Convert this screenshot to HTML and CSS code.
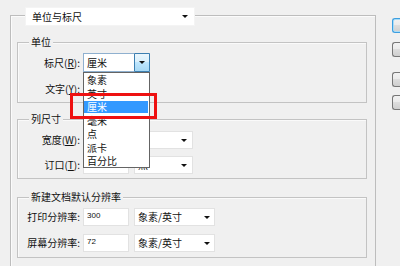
FILE: index.html
```html
<!DOCTYPE html>
<html lang="zh-CN">
<head>
<meta charset="utf-8">
<title>单位与标尺</title>
<link rel="stylesheet" href="styles.css">
</head>
<body>
<div class="window">
  <div class="panel">
    <div class="field select panel-head"><span>单位与标尺</span><i class="caret"></i></div>

    <section class="group group-units">
      <div class="group-title">单位</div>
      <div class="rows">
        <div class="row row-19">
          <span class="lbl">标尺(<u>R</u>):</span>
          <div class="combo-wrap">
            <div class="field select select-focus w67"><span>厘米</span><span class="drop-btn"><i class="caret"></i></span></div>
            <ul class="listbox">
              <li>象素</li>
              <li>英寸</li>
              <li class="hl">厘米</li>
              <li>毫米</li>
              <li>点</li>
              <li>派卡</li>
              <li>百分比</li>
            </ul>
            <div class="callout"></div>
          </div>
        </div>
        <div class="row row-19">
          <span class="lbl">文字(<u>Y</u>):</span>
          <div class="field select w67"><span></span><i class="caret"></i></div>
        </div>
      </div>
    </section>

    <section class="group group-cols">
      <div class="group-title">列尺寸</div>
      <div class="rows">
        <div class="row">
          <span class="lbl">宽度(<u>W</u>):</span>
          <div class="field w46"></div>
          <div class="field select w59"><span></span><i class="caret"></i></div>
        </div>
        <div class="row">
          <span class="lbl">订口(<u>T</u>):</span>
          <div class="field w46"></div>
          <div class="field select w59"><span>点</span><i class="caret"></i></div>
        </div>
      </div>
    </section>

    <section class="group group-res">
      <div class="group-title">新建文档默认分辨率</div>
      <div class="rows">
        <div class="row">
          <span class="lbl">打印分辨率:</span>
          <div class="field w46 num">300</div>
          <div class="field select w81"><span>象素/英寸</span><i class="caret"></i></div>
        </div>
        <div class="row">
          <span class="lbl">屏幕分辨率:</span>
          <div class="field w46 num">72</div>
          <div class="field select w81"><span>象素/英寸</span><i class="caret"></i></div>
        </div>
      </div>
    </section>
  </div>

  <div class="buttons">
    <div class="btn btn-default"></div>
    <div class="btn b2"></div>
    <div class="btn b3"></div>
    <div class="btn b4"></div>
  </div>
</div>
</body>
</html>
```

FILE: styles.css
```css
html, body {
  margin: 0;
  padding: 0;
  width: 400px;
  height: 266px;
  overflow: hidden;
  background: #f0f0f0;
}
body {
  font-family: "Noto Sans CJK SC", "Noto Sans", sans-serif;
  font-size: 10px;
  color: #111;
  line-height: 12px;
}
.window {
  display: flex;
  align-items: flex-start;
}
.panel {
  flex: none;
  margin: 15px 0 0 10px;
  width: 366px;
  height: 251px;
  box-sizing: border-box;
  border: 1px solid #bdbdbd;
  border-bottom: none;
  padding: 0 8px 0 6px;
  box-shadow: inset 1px 1px 0 #fbfbfb;
}
.field {
  background: #fff;
  border: 1px solid #e2e2e2;
  box-sizing: border-box;
  height: 18px;
  display: flex;
  align-items: center;
  padding-left: 3px;
  flex: none;
}
.select {
  justify-content: space-between;
}
.caret {
  display: block;
  width: 0;
  height: 0;
  border-left: 3px solid transparent;
  border-right: 3px solid transparent;
  border-top: 3px solid #111;
  margin-right: 5px;
}
.panel-head {
  margin: -9px 0 0 8px;
  width: 170px;
  height: 19px;
  padding-left: 6px;
  border-color: #f4f4f4;
}
.panel-head .caret { margin-right: 6px; }

.group {
  border: 1px solid #c3c3c3;
  box-shadow: inset 1px 1px 0 #fafafa;
}
.group-units { margin-top: 16px; padding-bottom: 4px; }
.group-cols { margin-top: 16px; padding-bottom: 4px; }
.group-res { margin-top: 18px; padding-bottom: 5px; }

.group-title {
  margin: -7px 0 0 11px;
  padding: 0 2px;
  width: fit-content;
  height: 12px;
  line-height: 12px;
  background: #f0f0f0;
}
.rows {
  display: flex;
  flex-direction: column;
  gap: 7px;
  margin-top: 5px;
}
.group-cols .rows { margin-top: 6px; }
.group-res .rows { gap: 8px; }

.row {
  display: flex;
  align-items: center;
  height: 18px;
}
.row-19 { height: 19px; }
.row-19 .field { height: 19px; }
.lbl {
  width: 62px;
  margin-right: 3px;
  text-align: right;
  white-space: nowrap;
  flex: none;
}
.lbl u { text-decoration-thickness: 1px; text-underline-offset: 1px; }

.w46 { width: 46px; }
.w59 { width: 59px; margin-left: 5px; }
.w67 { width: 67px; }
.w81 { width: 81px; margin-left: 5px; }
.w81 .caret { margin-right: 4px; }

.num {
  font-family: "Liberation Sans", Arial, sans-serif;
  font-size: 8px;
  align-items: flex-start;
  padding-top: 2px;
  line-height: 9px;
}

.combo-wrap {
  position: relative;
}
.select-focus {
  border-color: #8fb0cf;
  padding-right: 0;
}
.drop-btn {
  display: flex;
  align-items: center;
  justify-content: center;
  align-self: stretch;
  width: 14px;
  margin: -1px -1px -1px 0;
  border: 1px solid #3c7fb1;
  border-radius: 1px;
  background: linear-gradient(#eaf6fd, #d9f0fc 45%, #bee6fd 50%, #a7d9f5);
}
.drop-btn .caret { margin-right: 0; }

.listbox {
  position: absolute;
  z-index: 5;
  left: 0;
  top: 19px;
  width: 67px;
  height: 96px;
  box-sizing: border-box;
  margin: 0;
  padding: 0;
  list-style: none;
  background: #fff;
  border: 1px solid #646464;
}
.listbox li {
  height: 13.5px;
  line-height: 13.5px;
  padding-left: 3px;
}
.listbox li.hl {
  background: #3399ff;
  color: #fff;
  margin: 1px 1px 1px 0;
  height: 11.5px;
  line-height: 11.5px;
}
.callout {
  position: absolute;
  z-index: 6;
  left: -13px;
  top: 40px;
  width: 87px;
  height: 26px;
  box-sizing: border-box;
  border: 3px solid #ee1111;
}

.buttons {
  margin-left: 16px;
  display: flex;
  flex-direction: column;
  flex: none;
}
.btn {
  width: 8px;
  height: 15px;
  box-sizing: border-box;
  border: 1px solid #777;
  border-right: none;
  border-radius: 3px 0 0 3px;
  background: linear-gradient(#f2f2f2, #ebebeb 45%, #dddddd 50%, #cfcfcf);
}
.btn-default {
  margin-top: 18px;
  border-color: #3c9ee0;
  box-shadow: inset 1px 0 0 #a8dcf7, inset 0 1px 0 #a8dcf7, inset 0 -1px 0 #a8dcf7;
}
.b2 { margin-top: 9px; }
.b3 { margin-top: 15px; }
.b4 { margin-top: 8px; }
```
